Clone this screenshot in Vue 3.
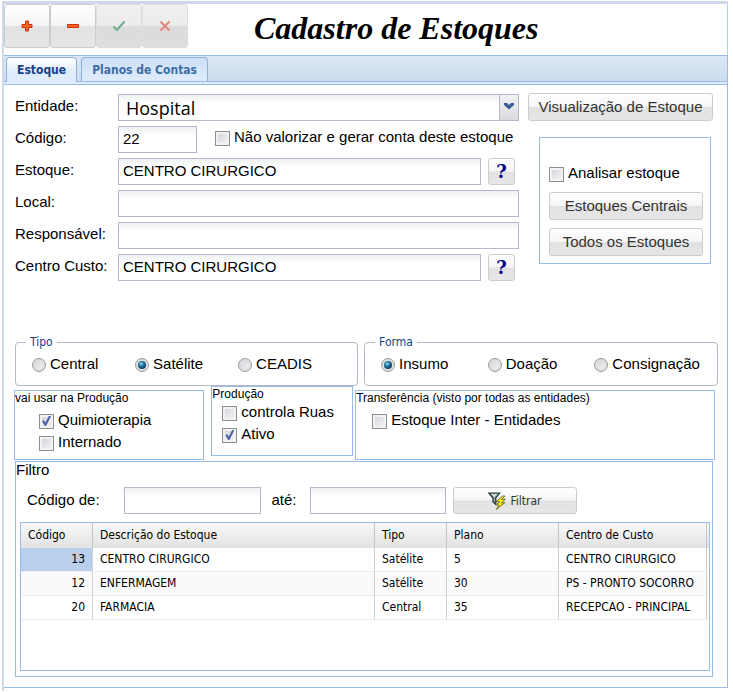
<script setup>
import { ref } from 'vue'

const tabs = ['Estoque', 'Planos de Contas']
const activeTab = ref('Estoque')
const tipo = ref('Satélite')
const forma = ref('Insumo')
const codigo = ref('22')
const estoque = ref('CENTRO CIRURGICO')
const local = ref('')
const responsavel = ref('')
const centroCusto = ref('CENTRO CIRURGICO')
const tipos = ['Central', 'Satélite', 'CEADIS']
const formas = ['Insumo', 'Doação', 'Consignação']
const rows = [
  { codigo: 13, descricao: 'CENTRO CIRURGICO', tipo: 'Satélite', plano: 5, centro: 'CENTRO CIRURGICO' },
  { codigo: 12, descricao: 'ENFERMAGEM', tipo: 'Satélite', plano: 30, centro: 'PS - PRONTO SOCORRO' },
  { codigo: 20, descricao: 'FARMACIA', tipo: 'Central', plano: 35, centro: 'RECEPCAO - PRINCIPAL' },
]
</script>

<template>
  <main class="window">
    <header class="toolbar">
      <div class="tools">
        <button class="btn tool" type="button" aria-label="Adicionar">
          <svg width="12" height="12" viewBox="0 0 12 12"><path d="M4.500 1h3v3.500H11v3H7.500V11h-3V7.500H1v-3h3.500z" fill="#f4641c" stroke="#d03010" /></svg>
        </button>
        <button class="btn tool" type="button" aria-label="Remover">
          <svg width="12" height="12" viewBox="0 0 12 12"><path d="M.5 4.500h11v3H.5z" fill="#f4641c" stroke="#d03010" /></svg>
        </button>
        <button class="btn tool off" type="button" disabled aria-label="Confirmar">
          <svg width="14" height="12" viewBox="0 0 14 12"><path d="M1.500 6.500l3.500 3.500L12.500 1.500" fill="none" stroke="#6fae88" stroke-width="2" /></svg>
        </button>
        <button class="btn tool off" type="button" disabled aria-label="Cancelar">
          <svg width="12" height="12" viewBox="0 0 12 12"><path d="M1.500 1.500l9 9M10.500 1.500l-9 9" fill="none" stroke="#e58a80" stroke-width="2.200" /></svg>
        </button>
      </div>
      <h1>Cadastro de Estoques</h1>
    </header>

    <nav class="tabs">
      <button v-for="t in tabs" :key="t" type="button" class="tab" :class="{ active: t === activeTab }" @click="activeTab = t">{{ t }}</button>
    </nav>
    <div class="tab-strip"></div>

    <div class="content">
      <section class="top">
        <div class="form">
          <div class="row">
            <label for="entidade">Entidade:</label>
            <div class="combo">
              <select id="entidade"><option>Hospital</option></select>
              <span class="arrow">
                <svg width="10" height="7" viewBox="0 0 10 7"><path d="M0 0h3l2 2 2-2h3v2L5 6.500 0 2z" fill="#3c5a96" /></svg>
              </span>
            </div>
          </div>
          <div class="row">
            <label for="codigo">Código:</label>
            <input id="codigo" v-model="codigo" class="text short" type="text">
            <label class="check inline"><input type="checkbox">Não valorizar e gerar conta deste estoque</label>
          </div>
          <div class="row">
            <label for="estoque">Estoque:</label>
            <input id="estoque" v-model="estoque" class="text" type="text">
            <button class="btn help" type="button">?</button>
          </div>
          <div class="row">
            <label for="local">Local:</label>
            <input id="local" v-model="local" class="text" type="text">
          </div>
          <div class="row">
            <label for="responsavel">Responsável:</label>
            <input id="responsavel" v-model="responsavel" class="text" type="text">
          </div>
          <div class="row">
            <label for="centro">Centro Custo:</label>
            <input id="centro" v-model="centroCusto" class="text" type="text">
            <button class="btn help" type="button">?</button>
          </div>
        </div>

        <aside class="side">
          <button class="btn" type="button">Visualização de Estoque</button>
          <div class="analysis">
            <label class="check"><input type="checkbox">Analisar estoque</label>
            <button class="btn" type="button">Estoques Centrais</button>
            <button class="btn" type="button">Todos os Estoques</button>
          </div>
        </aside>
      </section>

      <section class="choices">
        <fieldset class="tipo">
          <legend>Tipo</legend>
          <div class="radios">
            <label v-for="t in tipos" :key="t" class="check"><input v-model="tipo" type="radio" name="tipo" :value="t">{{ t }}</label>
          </div>
        </fieldset>
        <fieldset class="forma">
          <legend>Forma</legend>
          <div class="radios">
            <label v-for="f in formas" :key="f" class="check"><input v-model="forma" type="radio" name="forma" :value="f">{{ f }}</label>
          </div>
        </fieldset>
      </section>

      <section class="boxes">
        <div class="box usage">
          <h2>vai usar na Produção</h2>
          <label class="check"><input type="checkbox" checked>Quimioterapia</label>
          <label class="check"><input type="checkbox">Internado</label>
        </div>
        <div class="box production">
          <h2>Produção</h2>
          <label class="check"><input type="checkbox">controla Ruas</label>
          <label class="check"><input type="checkbox" checked>Ativo</label>
        </div>
        <div class="box transfer">
          <h2>Transferência (visto por todas as entidades)</h2>
          <label class="check"><input type="checkbox">Estoque Inter - Entidades</label>
        </div>
      </section>

      <section class="filter">
        <h2>Filtro</h2>
        <div class="filter-row">
          <label class="from" for="de">Código de:</label>
          <input id="de" class="text" type="text">
          <label class="to" for="ate">até:</label>
          <input id="ate" class="text" type="text">
          <button class="btn run" type="button">
            <svg width="18" height="18" viewBox="0 0 18 18">
              <path d="M.7 1h11L7.800 6v6.500L5 10V6z" fill="#8fa3a3" stroke="#263434" stroke-width="1.200" />
              <path d="M3 2.200h6L6.500 5z" fill="#dfe9e9" />
              <path d="M14.500 4L8 9.700h3.600L8.500 13h2.600L8.300 17.500l8.400-6.700h-3.200l4-3.600h-3.900l3.400-3.200z" fill="#f4ec22" stroke="#5a5410" stroke-width=".8" />
            </svg>
            <span>Filtrar</span>
          </button>
        </div>
        <div class="grid">
          <table>
            <colgroup><col class="c1"><col class="c2"><col class="c3"><col class="c4"><col class="c5"></colgroup>
            <thead>
              <tr><th>Código</th><th>Descrição do Estoque</th><th>Tipo</th><th>Plano</th><th>Centro de Custo</th></tr>
            </thead>
            <tbody>
              <tr v-for="(r, i) in rows" :key="r.codigo">
                <td class="num" :class="{ selected: i === 0 }">{{ r.codigo }}</td>
                <td>{{ r.descricao }}</td>
                <td>{{ r.tipo }}</td>
                <td>{{ r.plano }}</td>
                <td>{{ r.centro }}</td>
              </tr>
            </tbody>
          </table>
        </div>
      </section>
    </div>
  </main>
</template>

<style>
body {
  background: #fff;
}
</style>

<style scoped>
* {
  box-sizing: border-box;
}
.window {
  margin: 1px 5px 0 2px;
  padding-bottom: 3px;
  border-top: 3px solid #cdd9e8;
  border-left: 2px solid #cdd9e8;
  font: 15px/20px "Liberation Sans", Arial, sans-serif;
  color: #000;
}
button,
input,
select {
  font: inherit;
  color: inherit;
  margin: 0;
}
.btn {
  height: 28px;
  padding: 0 4px;
  border: 1px solid #ccc;
  border-radius: 3px;
  background: linear-gradient(#fff 0%, #f5f5f5 48%, #e2e2e2 52%, #e6e6e6 100%);
  color: #333;
  white-space: nowrap;
}
.toolbar {
  display: flex;
  height: 51px;
  border-right: 1px solid #9bdce8;
}
.tools {
  display: flex;
}
.tool {
  display: flex;
  align-items: center;
  justify-content: center;
  width: 46px;
  height: 44px;
}
.tool.off {
  background: linear-gradient(#f1f1f1 0%, #ececec 48%, #dbdbdb 52%, #dedede 100%);
  border-color: #ddd;
}
h1 {
  margin: 0 0 0 66px;
  font: italic bold 32px/48px "Liberation Serif", "Times New Roman", serif;
  white-space: nowrap;
}
.tabs {
  display: flex;
  align-items: flex-end;
  gap: 4px;
  height: 26px;
  padding-left: 2px;
  border-top: 1px solid #99bbe8;
  border-right: 1px solid #99bbe8;
  background: linear-gradient(#dde8f5, #cbdbed);
}
.tab {
  height: 24px;
  padding: 0 10px;
  border: 1px solid #8db2e3;
  border-bottom: 0;
  border-radius: 4px 4px 0 0;
  background: linear-gradient(#cfe0f5, #deecfd);
  color: #416da3;
  font: bold 12px/16px "DejaVu Sans Condensed", Tahoma, sans-serif;
  white-space: nowrap;
}
.tab.active {
  position: relative;
  height: 25px;
  margin-bottom: -1px;
  background: linear-gradient(#fff, #deecfd 60%);
  color: #15428b;
}
.tab-strip {
  height: 4px;
  border: 1px solid #99bbe8;
  border-left: 0;
  background: #deecfd;
}
.content {
  padding: 8px 9px 10px 11px;
  border-right: 1px solid #99bbe8;
  border-bottom: 1px solid #99bbe8;
}
.top {
  display: flex;
  gap: 9px;
  padding-right: 5px;
}
.form {
  flex: 1;
  display: flex;
  flex-direction: column;
  gap: 5px;
  padding-top: 1px;
}
.row {
  display: flex;
  height: 27px;
}
.row > label:first-child {
  flex: 0 0 103px;
  line-height: 23px;
}
.text {
  flex: 1;
  min-width: 0;
  height: 27px;
  padding: 0 4px 3px;
  border: 1px solid #b5b8c8;
  border-radius: 0;
  background: linear-gradient(#eef1f1, #fff 8px);
}
.text.short {
  flex: 0 0 79px;
}
.combo {
  position: relative;
  flex: 1;
  display: flex;
}
select {
  flex: 1;
  height: 27px;
  padding: 2px 24px 0 7px;
  appearance: none;
  border: 1px solid #b5b8c8;
  border-radius: 0;
  background: linear-gradient(#eef1f1, #fff 8px);
  font: 18px/23px "Open Sans", "Noto Sans", sans-serif;
}
.arrow {
  position: absolute;
  top: 1px;
  right: 1px;
  bottom: 1px;
  display: flex;
  justify-content: center;
  width: 19px;
  padding-top: 8px;
  border-left: 1px solid #b5b8c8;
  background: linear-gradient(#f2f2f4, #d9dae0);
  pointer-events: none;
}
.help {
  width: 27px;
  height: 27px;
  margin: 0 4px 0 7px;
  padding: 0;
  color: #00008b;
  font: bold 18px/22px "DejaVu Serif", serif;
}
.check {
  display: flex;
  align-items: center;
  gap: 4px;
  line-height: 22px;
  white-space: nowrap;
}
.check.inline {
  height: 22px;
  margin-left: 18px;
}
input[type="checkbox"],
input[type="radio"] {
  flex: none;
  display: flex;
  align-items: center;
  justify-content: center;
  appearance: none;
  width: 15px;
  height: 15px;
  margin-top: 2px;
  border: 1px solid #8e8f8f;
  background: linear-gradient(135deg, #cdd0d6, #f8f8f8);
  box-shadow: inset 0 0 0 2px #f2f2f2;
}
input[type="radio"] {
  width: 14px;
  height: 14px;
  border-color: #999;
  border-radius: 50%;
  box-shadow: inset 0 0 0 2px #dedede;
}
input[type="checkbox"]:checked::before {
  content: "";
  width: 9px;
  height: 10px;
  background: #4a63a9;
  clip-path: polygon(0 50%, 22% 42%, 38% 66%, 76% 0, 100% 0, 46% 100%, 32% 100%);
}
input[type="radio"]:checked::before {
  content: "";
  width: 8px;
  height: 8px;
  border-radius: 50%;
  background: radial-gradient(circle at 40% 35%, #8fe0f8 0, #23759f 35%, #0b3050 80%);
}
.side {
  flex: 0 0 185px;
  display: flex;
  flex-direction: column;
}
.analysis {
  display: flex;
  flex-direction: column;
  gap: 8px;
  margin: 16px 2px 0 11px;
  padding: 24px 7px 7px 9px;
  border: 1px solid #99bbe8;
}
.choices {
  display: flex;
  gap: 6px;
  margin-top: 54px;
}
fieldset {
  min-width: 0;
  margin: 0;
  padding: 5px 16px 11px;
  border: 1px solid #b5b8c8;
  border-radius: 4px;
}
.tipo {
  flex: 343 1 0;
}
.forma {
  flex: 355 1 0;
}
legend {
  margin-left: -6px;
  padding: 0 4px;
  color: #15428b;
  font: 12px/14px "DejaVu Sans Condensed", Tahoma, sans-serif;
}
.radios {
  display: grid;
  grid-template-columns: repeat(3, 1fr);
}
.radios .check {
  line-height: 20px;
}
.boxes {
  display: flex;
  align-items: flex-start;
  margin: 4px 3px 0 -1px;
}
.box {
  min-height: 70px;
  border: 1px solid #99bbe8;
}
.box h2 {
  margin: 0 0 4px;
  font-size: 12px;
  font-weight: normal;
  line-height: 14px;
  white-space: nowrap;
}
.usage {
  flex: 190 1 0;
}
.usage .check {
  padding-left: 24px;
}
.production {
  flex: 141 1 0;
  margin: -4px 2px 0 7px;
}
.production h2 {
  margin-bottom: 0;
}
.production .check {
  padding-left: 10px;
}
.transfer {
  flex: 361 1 0;
}
.transfer .check {
  padding-left: 16px;
}
.filter {
  margin: 1px 5px 0 0;
  padding: 0 2px 5px 4px;
  border: 1px solid #99bbe8;
}
.filter h2 {
  margin: 0 0 9px -4px;
  font-size: 15px;
  font-weight: normal;
  line-height: 16px;
}
.filter-row {
  display: flex;
  margin: 0 133px 8px 7px;
  line-height: 26px;
}
.from {
  flex: 0 0 97px;
}
.to {
  flex: 0 0 49px;
  padding-left: 11px;
}
.run {
  flex: 0 0 124px;
  display: flex;
  align-items: center;
  justify-content: center;
  gap: 4px;
  height: 27px;
  margin-left: 7px;
  font: 12px/16px "DejaVu Sans Condensed", Tahoma, sans-serif;
}
.grid {
  min-height: 149px;
  border: 1px solid #99bbe8;
  background: linear-gradient(#f9f9f9, #e3e2e3) 0 0 / 100% 25px no-repeat;
}
table {
  width: calc(100% - 2px);
  table-layout: fixed;
  border-collapse: separate;
  border-spacing: 0;
  font: 12px/16px "DejaVu Sans Condensed", Tahoma, sans-serif;
}
.c1 {
  width: 72px;
}
.c3 {
  width: 72px;
}
.c4 {
  width: 112px;
}
.c5 {
  width: 148px;
}
th,
td {
  padding: 0 0 2px 7px;
  border-right: 1px solid #d0d0d0;
  text-align: left;
  font-weight: normal;
  white-space: nowrap;
}
th {
  height: 25px;
  border-right-color: #c5c5c5;
}
td {
  height: 24px;
  border-bottom: 1px solid #ededed;
  background: #fff;
}
tbody tr:nth-child(2) td {
  background: #fafafa;
}
td.num {
  padding-right: 7px;
  text-align: right;
}
td.num.selected {
  background: #b8cfee;
}
</style>
